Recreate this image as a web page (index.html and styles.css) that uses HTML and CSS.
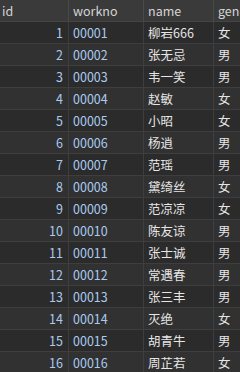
FILE: index.html
```html
<!DOCTYPE html>
<html lang="zh">
<head>
<meta charset="utf-8">
<link rel="stylesheet" href="styles.css">
</head>
<body>
<div class="grid">
  <div class="row head"><div class="c id">id</div><div class="c no">workno</div><div class="c nm">name</div><div class="c gd">gender</div></div>
  <div class="row"><div class="c id num">1</div><div class="c no num">00001</div><div class="c nm">柳岩666</div><div class="c gd">女</div></div>
  <div class="row"><div class="c id num">2</div><div class="c no num">00002</div><div class="c nm">张无忌</div><div class="c gd">男</div></div>
  <div class="row"><div class="c id num">3</div><div class="c no num">00003</div><div class="c nm">韦一笑</div><div class="c gd">男</div></div>
  <div class="row"><div class="c id num">4</div><div class="c no num">00004</div><div class="c nm">赵敏</div><div class="c gd">女</div></div>
  <div class="row"><div class="c id num">5</div><div class="c no num">00005</div><div class="c nm">小昭</div><div class="c gd">女</div></div>
  <div class="row"><div class="c id num">6</div><div class="c no num">00006</div><div class="c nm">杨逍</div><div class="c gd">男</div></div>
  <div class="row"><div class="c id num">7</div><div class="c no num">00007</div><div class="c nm">范瑶</div><div class="c gd">男</div></div>
  <div class="row"><div class="c id num">8</div><div class="c no num">00008</div><div class="c nm">黛绮丝</div><div class="c gd">女</div></div>
  <div class="row"><div class="c id num">9</div><div class="c no num">00009</div><div class="c nm">范凉凉</div><div class="c gd">女</div></div>
  <div class="row"><div class="c id num">10</div><div class="c no num">00010</div><div class="c nm">陈友谅</div><div class="c gd">男</div></div>
  <div class="row"><div class="c id num">11</div><div class="c no num">00011</div><div class="c nm">张士诚</div><div class="c gd">男</div></div>
  <div class="row"><div class="c id num">12</div><div class="c no num">00012</div><div class="c nm">常遇春</div><div class="c gd">男</div></div>
  <div class="row"><div class="c id num">13</div><div class="c no num">00013</div><div class="c nm">张三丰</div><div class="c gd">男</div></div>
  <div class="row"><div class="c id num">14</div><div class="c no num">00014</div><div class="c nm">灭绝</div><div class="c gd">女</div></div>
  <div class="row"><div class="c id num">15</div><div class="c no num">00015</div><div class="c nm">胡青牛</div><div class="c gd">男</div></div>
  <div class="row"><div class="c id num">16</div><div class="c no num">00016</div><div class="c nm">周芷若</div><div class="c gd">女</div></div>
</div>
</body>
</html>
```
FILE: styles.css
```css
html, body {
  margin: 0;
  padding: 0;
  background: #2b2b2b;
  overflow: hidden;
}
.grid {
  width: 300px;
  font-family: "Noto Sans CJK SC", "Noto Sans", sans-serif;
  font-size: 12.5px;
  color: #e6e6e6;
}
.row {
  display: grid;
  grid-template-columns: 69px 75px 70px 86px;
  height: 22px;
  box-sizing: border-box;
  border-bottom: 1px solid #3e3e3e;
  background: #2b2b2b;
}
.row:nth-child(odd) {
  background: #313131;
}
.row.head {
  background: #3a3a3a;
  border-bottom: 1px solid #454545;
  color: #d4d4d4;
}
.c {
  box-sizing: border-box;
  border-right: 1px solid #3e3e3e;
  padding: 0 4px;
  line-height: 21px;
  white-space: nowrap;
  overflow: hidden;
}
.head .c {
  border-right-color: #4a4a4a;
}
.head .id {
  padding-left: 2px;
}
.num {
  color: #aacbf0;
}
.id.num {
  text-align: right;
  padding-right: 5px;
}
```
